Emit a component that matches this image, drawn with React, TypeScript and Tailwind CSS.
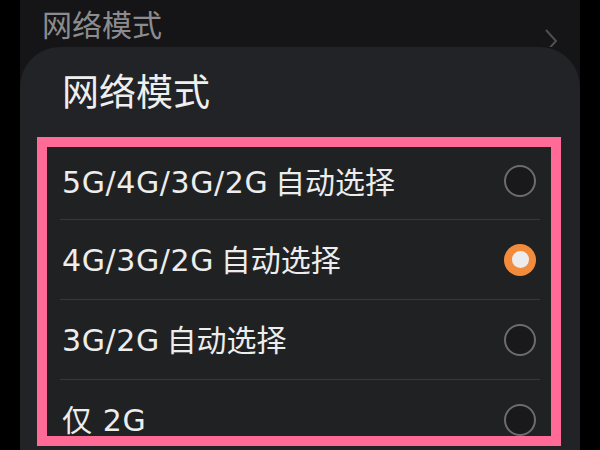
const options = [
  { label: '5G/4G/3G/2G', suffix: ' 自动选择', selected: false },
  { label: '4G/3G/2G', suffix: ' 自动选择', selected: true },
  { label: '3G/2G', suffix: ' 自动选择', selected: false },
  { label: '仅 2G', suffix: '', selected: false },
];

function Radio({ selected }: { selected: boolean }) {
  if (selected) {
    return (
      <div className="w-[32px] h-[32px] rounded-full bg-[#f28c3c] flex items-center justify-center shrink-0">
        <div className="w-[17px] h-[17px] rounded-full bg-[#ececec]" />
      </div>
    );
  }
  return <div className="w-[32px] h-[32px] rounded-full border-2 border-[#6c6c6e] bg-[#19191b] shrink-0" />;
}

export default function App() {
  return (
    <div
      className="w-[600px] h-[450px] bg-black flex justify-center overflow-hidden"
      style={{ fontFamily: '"Noto Sans CJK SC", "Noto Sans", sans-serif' }}
    >
      <div className="w-[560px] h-full bg-[#151517] flex flex-col">
        {/* behind the sheet */}
        <div className="h-[47px] shrink-0 flex justify-between overflow-hidden">
          <span className="pl-[22px] text-[30px] leading-[47px] text-[#8c8c8e]">网络模式</span>
          <svg className="mt-[28px] mr-[22px]" width="14" height="26" viewBox="0 0 14 26" fill="none">
            <polyline points="2,2 12,13 2,24" stroke="#4e4f52" strokeWidth="2" />
          </svg>
        </div>

        {/* bottom sheet */}
        <div className="flex-1 bg-[#222326] rounded-t-[40px] flex flex-col pb-[4px] min-h-0">
          <div className="h-[90px] shrink-0 flex items-center pb-[2px] pl-[42px] text-[37px] text-[#efefef]">
            网络模式
          </div>

          <div className="ml-[17px] mr-[19px] border-[10px] border-[#ff6b96] bg-[#202123] flex-1 min-h-0 flex flex-col overflow-hidden">
            {options.map((o, i) => (
              <div key={o.label} className={i === 0 ? 'h-[72px] shrink-0' : 'h-[80px] shrink-0'}>
                {i > 0 && <div className="h-px bg-[#37383b] ml-[13px] mr-[11px]" />}
                <div
                  className={
                    i === 0
                      ? 'h-[68px] flex items-center justify-between px-[15px]'
                      : 'h-[79px] flex items-center justify-between px-[15px]'
                  }
                >
                  <span className="text-[30px] text-[#ededed] whitespace-nowrap">
                    <span
                      className="tracking-[0.6px]"
                      style={{ fontFamily: '"DejaVu Sans", "Noto Sans CJK SC", sans-serif' }}
                    >
                      {o.label}
                    </span>
                    {o.suffix}
                  </span>
                  <Radio selected={o.selected} />
                </div>
              </div>
            ))}
          </div>
        </div>
      </div>
    </div>
  );
}
